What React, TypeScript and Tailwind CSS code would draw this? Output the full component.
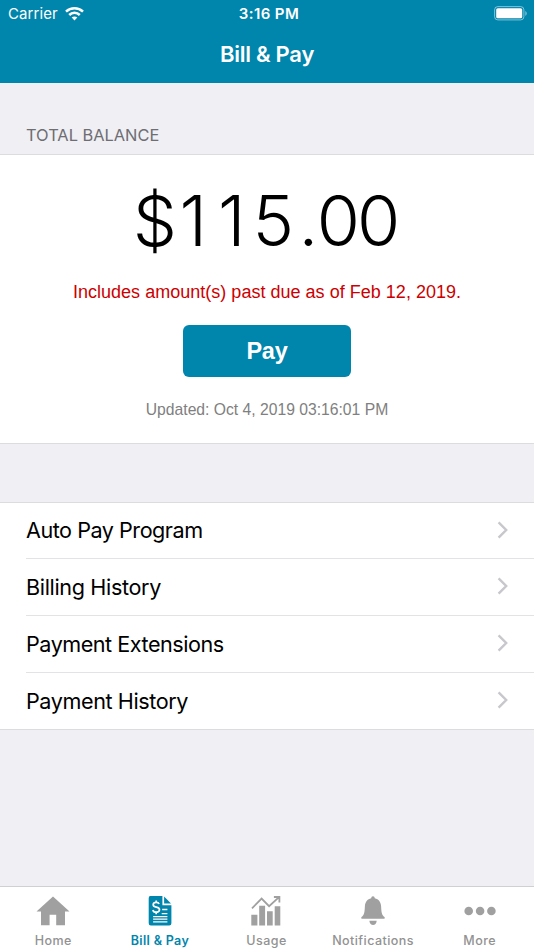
import type { ReactNode } from "react";

const menuItems = [
  { label: "Auto Pay Program", tracking: "tracking-[-0.48px]" },
  { label: "Billing History", tracking: "tracking-[-0.35px]" },
  { label: "Payment Extensions", tracking: "tracking-[-0.48px]" },
  { label: "Payment History", tracking: "tracking-[-0.42px]" },
];

function WifiIcon() {
  return (
    <svg width="19" height="14" viewBox="0 0 19 14" fill="none" stroke="white" strokeWidth="2.5">
      <path d="M1 4.7C5.7 .2 13.3 .2 18 4.7" />
      <path d="M4.2 8C7.2 5.1 11.8 5.1 14.8 8" />
      <path d="M9.5 13.5 6.7 10.6C8.3 9.1 10.7 9.1 12.3 10.6Z" fill="white" stroke="none" />
    </svg>
  );
}

function BatteryIcon() {
  return (
    <svg width="34" height="15" viewBox="0 0 34 15">
      <rect x=".6" y=".6" width="29.3" height="13.3" rx="3.2" fill="none" stroke="white" strokeOpacity=".5" />
      <rect x="2.2" y="2.2" width="26" height="10.1" rx="1.6" fill="white" />
      <path d="M31.3 5v4.8c1.9-.8 1.9-4 0-4.8Z" fill="white" fillOpacity=".5" />
    </svg>
  );
}

function ChevronIcon() {
  return (
    <svg className="mb-[2px]" width="12" height="18" viewBox="0 0 12 18" fill="none" stroke="#c7c7cc" strokeWidth="2.4">
      <path d="m1.6 1.4 7.6 7.6-7.6 7.6" />
    </svg>
  );
}

function HomeIcon() {
  return (
    <svg width="34" height="30" viewBox="0 0 34 30" fill="currentColor">
      <path d="M17 .4 33.5 15.5H29V29.3H20.2V18.8H13.6V29.3H5V15.5H.5Z" />
    </svg>
  );
}

function BillIcon() {
  return (
    <svg width="24" height="30" viewBox="0 0 24 30">
      <path d="M2.3 0H14.4V9.2H23.4V27.2Q23.4 29.4 21.2 29.4H2.9Q.7 29.4 .7 27.2V2.2Q.7 0 2.3 0Z" fill="currentColor" />
      <path d="M16.1 .6V7.5H23Z" fill="currentColor" />
      <path d="M5.1 20.6H19.4M5.1 23.2H19.4M5.1 25.8H19.4M14.2 13.5H19.4M13.7 17.6H19.4" stroke="white" strokeWidth="1.3" />
      <path d="M11.1 8Q10.5 6.4 8.2 6.4C4.5 6.4 4.2 10.3 7.5 10.9L9.2 11.3C12.7 12.2 12 16.2 8.2 16.2Q5.3 16.2 4.9 14M8.2 4.4V6.4M8.2 16.2V18.2" fill="none" stroke="white" strokeWidth="1.7" />
    </svg>
  );
}

function UsageIcon() {
  return (
    <svg width="30" height="30" viewBox="0 0 30 30" fill="currentColor">
      <path d="M.3 18.8h6.1v10.6H.3zM8.2 9.8h5.9v19.6H8.2zM16 15.2h5.7v14.2H16zM23.7 10.2h5.6v19.2h-5.6z" />
      <path d="M1 12.3 10.6 2.6 18.1 10.2 28 1.2M22.9 1H28.4V6.6" fill="none" stroke="currentColor" strokeWidth="1.8" />
    </svg>
  );
}

function BellIcon() {
  return (
    <svg width="24" height="30" viewBox="0 0 24 30" fill="currentColor">
      <path d="M12 .2C13.2 .2 13.6 1.1 13.8 2.2C17.7 3 19.9 6.1 20.1 10.3C20.4 16.1 20.6 19 23.5 21Q24.4 22.8 22.2 22.8H1.8Q-.4 22.8 .5 21C3.4 19 3.6 16.1 3.9 10.3C4.1 6.1 6.3 3 10.2 2.2C10.4 1.1 10.8 .2 12 .2Z" />
      <path d="M8.4 24.7H15.7C15.5 30.4 8.6 30.4 8.4 24.7Z" />
    </svg>
  );
}

function MoreIcon() {
  return (
    <svg width="32" height="30" viewBox="0 0 32 30" fill="currentColor">
      <circle cx="4.7" cy="15" r="4.3" />
      <circle cx="16.1" cy="15" r="4.3" />
      <circle cx="27.4" cy="15" r="4.3" />
    </svg>
  );
}

function Tab({ label, active = false, children }: { label: string; active?: boolean; children: ReactNode }) {
  return (
    <button type="button" className={`flex w-1/5 flex-col items-center pt-[9px] ${active ? "text-[#0085ac]" : "text-[#a0a0a0]"}`}>
      {children}
      <span className={`mt-[7px] text-[12.5px] leading-4 whitespace-nowrap ${active ? "font-semibold tracking-[0.35px]" : "font-medium tracking-[0.45px] text-[#929292]"}`}>
        {label}
      </span>
    </button>
  );
}

export default function App() {
  return (
    <div className="flex h-[950px] w-[534px] flex-col overflow-hidden bg-[#efeff4] font-['Inter','Liberation_Sans',sans-serif] text-black">
      <header className="h-[83px] shrink-0 bg-[#0085ac] text-white">
        <div className="grid h-7 grid-cols-3 items-center pr-[6px] pl-2">
          <div className="flex items-center gap-[7px]">
            <span className="text-[15px] leading-7 tracking-[0.1px]">Carrier</span>
            <WifiIcon />
          </div>
          <span className="pl-[2px] text-center text-[15px] leading-7 font-semibold tracking-[0.4px]">3:16 PM</span>
          <div className="flex justify-end pb-px">
            <BatteryIcon />
          </div>
        </div>
        <h1 className="text-center text-[22px] leading-[53px] font-semibold tracking-[-0.25px]">Bill &amp; Pay</h1>
      </header>

      <h2 className="h-[71px] shrink-0 pt-[40px] pl-[26px] text-[16.4px] leading-6 text-[#6d6d72]">TOTAL BALANCE</h2>

      <section className="flex h-[290px] shrink-0 flex-col items-center border-y border-[#dcdce0] bg-white">
        <p className="mt-[26px] pr-[4px] text-[70px] leading-20 font-light tracking-[-3px]">
          <span className="tracking-[2.5px]">$</span>
          <span className="tracking-[11px]">1</span>
          <span className="tracking-[7px]">1</span>
          <span className="tracking-[4.5px]">5</span>
          <span className="tracking-[-1.5px]">.</span>00
        </p>
        <p className="mt-[19px] font-['Liberation_Sans',sans-serif] text-[18px] leading-6 tracking-[0.02px] text-[#cc0000]">
          Includes amount(s) past due as of Feb 12, 2019.
        </p>
        <button type="button" className="mt-[21px] h-[52px] w-[168px] shrink-0 rounded-[6px] bg-[#0085ac] pt-[2px] font-['Liberation_Sans',sans-serif] text-[23.5px] font-bold tracking-[-0.2px] text-white">
          Pay
        </button>
        <p className="mt-[21px] font-['Liberation_Sans',sans-serif] text-[15.7px] leading-6 text-[#808080]">
          Updated: Oct 4, 2019 03:16:01 PM
        </p>
      </section>

      <ul className="mt-[58px] shrink-0 border-y border-[#dcdce0] bg-white pl-[26px]">
        {menuItems.map((item) => (
          <li
            key={item.label}
            className="flex h-[57px] items-center justify-between border-b border-[#e3e3e6] pr-[25px] first:h-[56px] last:h-[56px] last:border-b-0"
          >
            <span className={`text-[21.6px] ${item.tracking}`}>{item.label}</span>
            <ChevronIcon />
          </li>
        ))}
      </ul>

      <nav className="mt-auto flex h-[64px] shrink-0 border-t border-[#d0d0d3] bg-white pr-px">
        <Tab label="Home">
          <HomeIcon />
        </Tab>
        <Tab label="Bill & Pay" active>
          <BillIcon />
        </Tab>
        <Tab label="Usage">
          <UsageIcon />
        </Tab>
        <Tab label="Notifications">
          <BellIcon />
        </Tab>
        <Tab label="More">
          <MoreIcon />
        </Tab>
      </nav>
    </div>
  );
}
